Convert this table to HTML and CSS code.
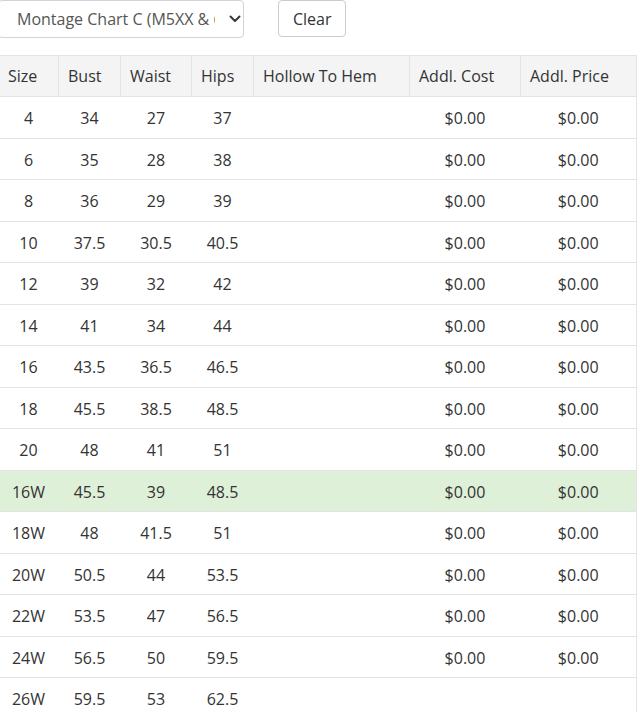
FILE: index.html
```html
<!DOCTYPE html>
<html>
<head>
<meta charset="utf-8">
<link rel="stylesheet" href="styles.css">
</head>
<body>
<div class="page">
  <div class="controls">
    <div class="select-wrap">
      <select class="chart-select">
        <option>Montage Chart C (M5XX &amp; 6XX Series)</option>
      </select>
      <svg class="chevron" width="12" height="8" viewBox="0 0 12 8"><path d="M1.5 1.5 L6 6 L10.5 1.5" fill="none" stroke="#343a40" stroke-width="2" stroke-linecap="round" stroke-linejoin="round"/></svg>
    </div>
    <button class="btn-clear">Clear</button>
  </div>
  <table class="size-table">
    <colgroup>
      <col class="c-size"><col class="c-bust"><col class="c-waist"><col class="c-hips"><col class="c-hollow"><col class="c-cost"><col class="c-price">
    </colgroup>
    <thead>
      <tr>
        <th>Size</th>
        <th>Bust</th>
        <th>Waist</th>
        <th>Hips</th>
        <th>Hollow To Hem</th>
        <th>Addl. Cost</th>
        <th>Addl. Price</th>
      </tr>
    </thead>
    <tbody>
      <tr><td>4</td><td>34</td><td>27</td><td>37</td><td></td><td>$0.00</td><td>$0.00</td></tr>
      <tr><td>6</td><td>35</td><td>28</td><td>38</td><td></td><td>$0.00</td><td>$0.00</td></tr>
      <tr><td>8</td><td>36</td><td>29</td><td>39</td><td></td><td>$0.00</td><td>$0.00</td></tr>
      <tr><td>10</td><td>37.5</td><td>30.5</td><td>40.5</td><td></td><td>$0.00</td><td>$0.00</td></tr>
      <tr><td>12</td><td>39</td><td>32</td><td>42</td><td></td><td>$0.00</td><td>$0.00</td></tr>
      <tr><td>14</td><td>41</td><td>34</td><td>44</td><td></td><td>$0.00</td><td>$0.00</td></tr>
      <tr><td>16</td><td>43.5</td><td>36.5</td><td>46.5</td><td></td><td>$0.00</td><td>$0.00</td></tr>
      <tr><td>18</td><td>45.5</td><td>38.5</td><td>48.5</td><td></td><td>$0.00</td><td>$0.00</td></tr>
      <tr><td>20</td><td>48</td><td>41</td><td>51</td><td></td><td>$0.00</td><td>$0.00</td></tr>
      <tr class="selected"><td>16W</td><td>45.5</td><td>39</td><td>48.5</td><td></td><td>$0.00</td><td>$0.00</td></tr>
      <tr><td>18W</td><td>48</td><td>41.5</td><td>51</td><td></td><td>$0.00</td><td>$0.00</td></tr>
      <tr><td>20W</td><td>50.5</td><td>44</td><td>53.5</td><td></td><td>$0.00</td><td>$0.00</td></tr>
      <tr><td>22W</td><td>53.5</td><td>47</td><td>56.5</td><td></td><td>$0.00</td><td>$0.00</td></tr>
      <tr><td>24W</td><td>56.5</td><td>50</td><td>59.5</td><td></td><td>$0.00</td><td>$0.00</td></tr>
      <tr><td>26W</td><td>59.5</td><td>53</td><td>62.5</td><td></td><td></td><td></td></tr>
    </tbody>
  </table>
</div>
</body>
</html>
```

FILE: styles.css
```css
html, body {
  margin: 0;
  padding: 0;
  background: #fff;
}
body {
  font-family: "Open Sans", "Liberation Sans", sans-serif;
  font-size: 16px;
  color: #333;
  overflow: hidden;
}
.page {
  margin-left: -2px;
}
.controls {
  display: flex;
  align-items: flex-start;
  gap: 34px;
  height: 38px;
}
.select-wrap {
  position: relative;
  width: 246px;
}
.chart-select {
  appearance: none;
  -webkit-appearance: none;
  width: 246px;
  height: 38px;
  box-sizing: border-box;
  margin: 0;
  padding: 0 28px 0 18px;
  border: 1px solid #ced4da;
  border-radius: 4px;
  background: #fff;
  font-family: "Open Sans", "Liberation Sans", sans-serif;
  font-size: 16px;
  color: #555;
  outline: none;
}
.chevron {
  position: absolute;
  left: 231px;
  top: 15px;
}
.btn-clear {
  height: 37px;
  box-sizing: border-box;
  margin: 0;
  padding: 0 13px 0 14px;
  border: 1px solid #ccc;
  border-radius: 4px;
  background: #fff;
  font-family: "Open Sans", "Liberation Sans", sans-serif;
  font-size: 16px;
  color: #333;
}
.size-table {
  margin-top: 17px;
  border-collapse: collapse;
  table-layout: fixed;
  width: 638px;
}
.size-table th,
.size-table td {
  border: 1px solid #e3e3e3;
  padding: 8px 8px;
  line-height: 24.5px;
  font-weight: 400;
}
.size-table th {
  background: #f4f4f4;
  text-align: left;
  padding-left: 9px;
  line-height: 24px;
}
.size-table td {
  text-align: center;
  border-left: none;
  border-right: none;
  padding-top: 9px;
  padding-bottom: 7px;
}
.size-table td:last-child {
  border-right: 1px solid #e3e3e3;
}
.size-table th:first-child {
  border-left-color: transparent;
}
.size-table tr.selected td {
  background: #dff0d8;
}
.c-size { width: 60px; }
.c-bust { width: 62px; }
.c-waist { width: 71px; }
.c-hips { width: 62px; }
.c-hollow { width: 156px; }
.c-cost { width: 111px; }
.c-price { width: 116px; }
```
